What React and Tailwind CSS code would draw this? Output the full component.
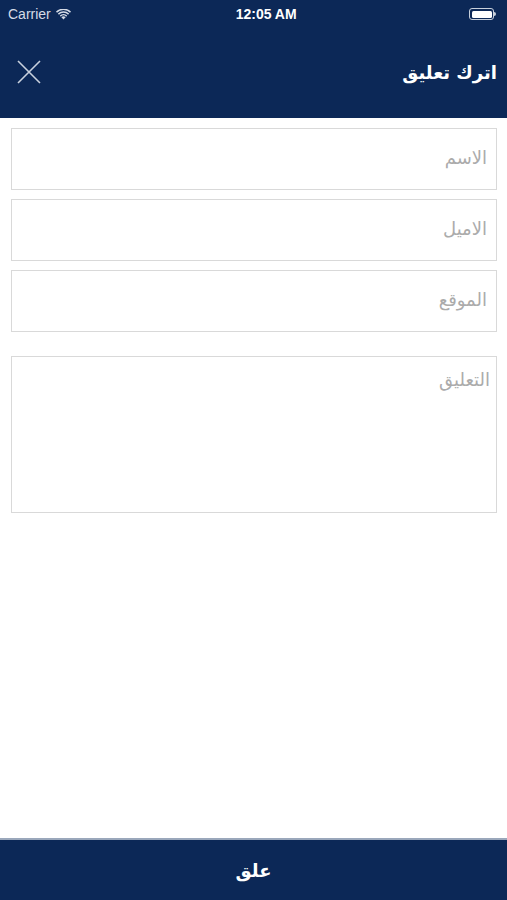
import React from "react";

export default function App() {
  return (
    <div className="w-[507px] h-[900px] flex flex-col bg-white font-['Liberation_Sans',sans-serif]">
      <header className="bg-[#0c2857] text-white h-[118px] flex flex-col">
        <div className="h-[28px] flex items-center justify-between px-[8px] text-[14px]">
          <div className="flex items-center gap-[5px] text-[#d5dbe6]">
            <span>Carrier</span>
            <svg width="15" height="11" viewBox="0 0 15 11" fill="#d5dbe6">
              <path d="M7.5 10.5 5.4 8.2a3 3 0 0 1 4.2 0z" />
              <path d="M3.8 6.6a5.3 5.3 0 0 1 7.4 0l-1 1.1a3.8 3.8 0 0 0-5.4 0z" />
              <path d="M1.9 4.6a8 8 0 0 1 11.2 0l-1 1.1a6.5 6.5 0 0 0-9.2 0z" />
              <path d="M0 2.6a10.7 10.7 0 0 1 15 0l-1 1.1a9.2 9.2 0 0 0-13 0z" />
            </svg>
          </div>
          <span className="font-bold text-[14px] pr-[8px]">12:05 AM</span>
          <div className="flex items-center pr-[3px]">
            <div className="w-[25px] h-[12px] rounded-[3px] border border-[#c8d0dc] p-[1.5px]">
              <div className="w-full h-full rounded-[1.5px] bg-white" />
            </div>
            <div className="w-[1.5px] h-[4px] bg-[#c8d0dc] rounded-r" />
          </div>
        </div>
        <div className="flex-1 flex items-center justify-between pl-[17px] pr-[10px] pb-[2px]">
          <svg width="24" height="24" viewBox="0 0 24 24" stroke="#c9d1de" strokeWidth="1.6" fill="none">
            <path d="M1 1 23 23M23 1 1 23" />
          </svg>
          <h1 dir="rtl" className="font-['DejaVu_Sans',sans-serif] font-bold text-[18px]">اترك تعليق</h1>
        </div>
      </header>

      <main dir="rtl" className="flex-1 flex flex-col pl-[11px] pr-[10px] pt-[10px] gap-[9px] font-['DejaVu_Sans',sans-serif]">
        <Field label="الاسم" />
        <Field label="الاميل" />
        <Field label="الموقع" />
        <div className="mt-[15px] h-[157px] border border-[#d9d9d9] pt-[9px] pr-[6px] text-[18px] text-[#ababab]">
          التعليق
        </div>
      </main>

      <footer className="h-[62px] bg-[#0c2857] border-t-[2px] border-[#9aa7bb] flex items-center justify-center">
        <span dir="rtl" className="text-white font-bold text-[18px] font-['DejaVu_Sans',sans-serif]">علق</span>
      </footer>
    </div>
  );
}

function Field({ label }) {
  return (
    <div className="h-[62px] border border-[#d9d9d9] flex items-center pr-[9px] pb-[4px] text-[18px] text-[#ababab]">
      {label}
    </div>
  );
}
